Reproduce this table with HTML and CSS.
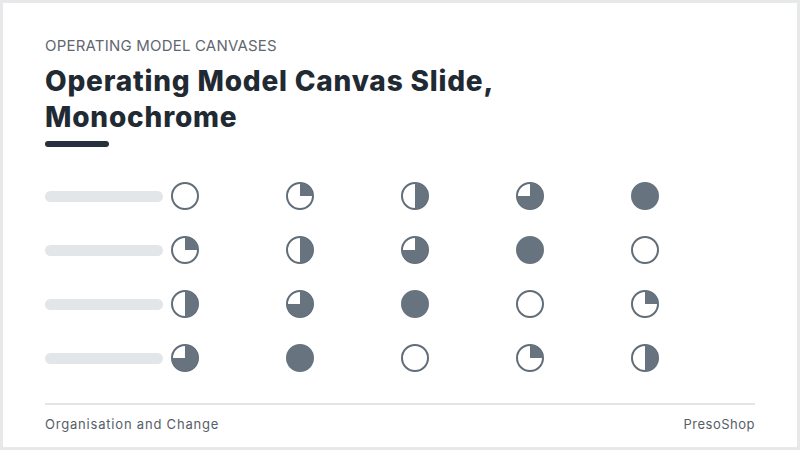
FILE: index.html
```html
<!DOCTYPE html>
<html>
<head>
<meta charset="utf-8">
<link rel="stylesheet" href="styles.css">
</head>
<body>
<div class="frame">
  <header class="head">
    <div class="kicker">OPERATING MODEL CANVASES</div>
    <h1 class="title">Operating Model Canvas Slide,<br>Monochrome</h1>
    <div class="rule"></div>
  </header>
  <main class="grid">
    <div class="bar"></div>
    <svg class="dot" viewBox="0 0 28 28"><circle cx="14" cy="14" r="13" class="ring"/></svg>
    <svg class="dot" viewBox="0 0 28 28"><circle cx="14" cy="14" r="13" class="ring"/><path class="fill" d="M14 14 L14 1 A13 13 0 0 1 27 14 Z"/></svg>
    <svg class="dot" viewBox="0 0 28 28"><circle cx="14" cy="14" r="13" class="ring"/><path class="fill" d="M14 1 A13 13 0 0 1 14 27 Z"/></svg>
    <svg class="dot" viewBox="0 0 28 28"><circle cx="14" cy="14" r="13" class="ring"/><path class="fill" d="M14 14 L14 1 A13 13 0 1 1 1 14 Z"/></svg>
    <svg class="dot" viewBox="0 0 28 28"><circle cx="14" cy="14" r="13" class="ring full"/></svg>

    <div class="bar"></div>
    <svg class="dot" viewBox="0 0 28 28"><circle cx="14" cy="14" r="13" class="ring"/><path class="fill" d="M14 14 L14 1 A13 13 0 0 1 27 14 Z"/></svg>
    <svg class="dot" viewBox="0 0 28 28"><circle cx="14" cy="14" r="13" class="ring"/><path class="fill" d="M14 1 A13 13 0 0 1 14 27 Z"/></svg>
    <svg class="dot" viewBox="0 0 28 28"><circle cx="14" cy="14" r="13" class="ring"/><path class="fill" d="M14 14 L14 1 A13 13 0 1 1 1 14 Z"/></svg>
    <svg class="dot" viewBox="0 0 28 28"><circle cx="14" cy="14" r="13" class="ring full"/></svg>
    <svg class="dot" viewBox="0 0 28 28"><circle cx="14" cy="14" r="13" class="ring"/></svg>

    <div class="bar"></div>
    <svg class="dot" viewBox="0 0 28 28"><circle cx="14" cy="14" r="13" class="ring"/><path class="fill" d="M14 1 A13 13 0 0 1 14 27 Z"/></svg>
    <svg class="dot" viewBox="0 0 28 28"><circle cx="14" cy="14" r="13" class="ring"/><path class="fill" d="M14 14 L14 1 A13 13 0 1 1 1 14 Z"/></svg>
    <svg class="dot" viewBox="0 0 28 28"><circle cx="14" cy="14" r="13" class="ring full"/></svg>
    <svg class="dot" viewBox="0 0 28 28"><circle cx="14" cy="14" r="13" class="ring"/></svg>
    <svg class="dot" viewBox="0 0 28 28"><circle cx="14" cy="14" r="13" class="ring"/><path class="fill" d="M14 14 L14 1 A13 13 0 0 1 27 14 Z"/></svg>

    <div class="bar"></div>
    <svg class="dot" viewBox="0 0 28 28"><circle cx="14" cy="14" r="13" class="ring"/><path class="fill" d="M14 14 L14 1 A13 13 0 1 1 1 14 Z"/></svg>
    <svg class="dot" viewBox="0 0 28 28"><circle cx="14" cy="14" r="13" class="ring full"/></svg>
    <svg class="dot" viewBox="0 0 28 28"><circle cx="14" cy="14" r="13" class="ring"/></svg>
    <svg class="dot" viewBox="0 0 28 28"><circle cx="14" cy="14" r="13" class="ring"/><path class="fill" d="M14 14 L14 1 A13 13 0 0 1 27 14 Z"/></svg>
    <svg class="dot" viewBox="0 0 28 28"><circle cx="14" cy="14" r="13" class="ring"/><path class="fill" d="M14 1 A13 13 0 0 1 14 27 Z"/></svg>
  </main>
  <footer class="foot">
    <span>Organisation and Change</span>
    <span class="brand">PresoShop</span>
  </footer>
</div>
</body>
</html>
```
FILE: styles.css
```css
html, body {
  margin: 0;
  padding: 0;
  background: #ffffff;
}
.frame {
  box-sizing: border-box;
  width: 800px;
  height: 450px;
  border: 3px solid #e6e8ea;
  padding: 33px 42px 0 42px;
  display: flex;
  flex-direction: column;
  font-family: "Inter", "Noto Sans", sans-serif;
}
.kicker {
  font-size: 15px;
  line-height: 20px;
  color: #5f6770;
  letter-spacing: 0.2px;
}
.title {
  margin: 7px 0 0 0;
  font-size: 28px;
  line-height: 36px;
  font-weight: 800;
  color: #1f2a33;
  letter-spacing: 0.8px;
}
.rule {
  width: 64px;
  height: 6px;
  border-radius: 3px;
  background: #25323d;
  margin-top: 6px;
}
.grid {
  margin-top: 35px;
  display: grid;
  grid-template-columns: 126px repeat(5, 115px);
  grid-auto-rows: 28px;
  row-gap: 26px;
  align-items: center;
}
.bar {
  width: 118px;
  height: 11px;
  border-radius: 6px;
  background: #e3e6e8;
}
.dot {
  width: 28px;
  height: 28px;
  display: block;
}
.ring {
  fill: #ffffff;
  stroke: #616d78;
  stroke-width: 2;
}
.ring.full {
  fill: #67747f;
  stroke: #67747f;
}
.fill {
  fill: #67747f;
}
.foot {
  margin-top: 31px;
  border-top: 2px solid #e3e5e7;
  display: flex;
  justify-content: space-between;
  padding-top: 10px;
  font-size: 13px;
  line-height: 18px;
  color: #565e67;
  letter-spacing: 0.8px;
}
.brand {
  letter-spacing: 0.5px;
}
```
